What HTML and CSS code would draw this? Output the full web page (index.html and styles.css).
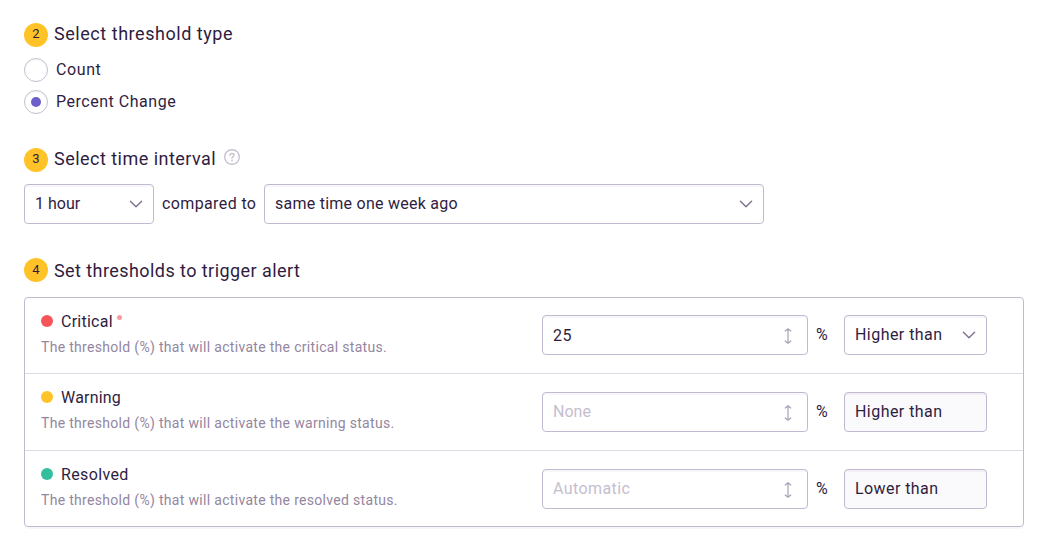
FILE: index.html
```html
<!DOCTYPE html>
<html lang="en">
<head>
<meta charset="utf-8">
<title>Alert thresholds</title>
<link rel="stylesheet" href="styles.css">
</head>
<body>
<svg class="sprite" aria-hidden="true">
  <symbol id="chevron" viewBox="0 0 14 8"><path d="M1.4 1.2 7 6.7 12.6 1.2"/></symbol>
  <symbol id="updown" viewBox="0 0 8 16"><path d="M4 .8v14.4M1.2 3 4 .8 6.8 3M1.2 13 4 15.2 6.8 13"/></symbol>
</svg>
<main class="form">
  <section class="step">
    <h2 class="title"><span class="badge">2</span><span class="title-text t-type">Select threshold type</span></h2>
    <div class="radios">
      <label class="radio"><span class="dial"></span><span class="t-count">Count</span></label>
      <label class="radio"><span class="dial checked"></span><span class="t-percent">Percent Change</span></label>
    </div>
  </section>

  <section class="step step-interval">
    <h2 class="title"><span class="badge">3</span><span class="title-text t-interval">Select time interval</span>
      <svg class="help" viewBox="0 0 16 16"><circle cx="8" cy="8" r="7.3"/><path d="M6 6.4C6 5.2 6.8 4.5 8 4.5s2 .7 2 1.7C10 7.6 8 7.6 8 9.2"/><circle class="point" cx="8" cy="11.4" r=".9"/></svg>
    </h2>
    <div class="interval">
      <div class="field duration"><span class="t-hour">1 hour</span><svg class="chevron"><use href="#chevron"/></svg></div>
      <span class="t-compared">compared to</span>
      <div class="field comparison"><span class="t-same">same time one week ago</span><svg class="chevron"><use href="#chevron"/></svg></div>
    </div>
  </section>

  <section class="step step-thresholds">
    <h2 class="title"><span class="badge">4</span><span class="title-text t-set">Set thresholds to trigger alert</span></h2>
    <div class="panel">
      <div class="row">
        <div class="info">
          <div class="name"><i class="dot critical"></i><span class="t-critical">Critical</span><i class="required"></i></div>
          <div class="desc">The threshold (%) that will activate the critical status.</div>
        </div>
        <div class="field number"><span class="t-number">25</span><svg class="updown"><use href="#updown"/></svg></div>
        <span class="unit">%</span>
        <div class="field direction"><span class="t-higher">Higher than</span><svg class="chevron"><use href="#chevron"/></svg></div>
      </div>
      <div class="row">
        <div class="info">
          <div class="name"><i class="dot warning"></i><span class="t-warning">Warning</span></div>
          <div class="desc">The threshold (%) that will activate the warning status.</div>
        </div>
        <div class="field number empty"><span class="t-none">None</span><svg class="updown"><use href="#updown"/></svg></div>
        <span class="unit">%</span>
        <div class="field direction disabled"><span class="t-higher">Higher than</span></div>
      </div>
      <div class="row">
        <div class="info">
          <div class="name"><i class="dot resolved"></i><span class="t-resolved">Resolved</span></div>
          <div class="desc">The threshold (%) that will activate the resolved status.</div>
        </div>
        <div class="field number empty"><span class="t-auto">Automatic</span><svg class="updown"><use href="#updown"/></svg></div>
        <span class="unit">%</span>
        <div class="field direction disabled"><span class="t-lower">Lower than</span></div>
      </div>
    </div>
  </section>
</main>
</body>
</html>
```

FILE: styles.css
```css
* { box-sizing: border-box; }
body {
  margin: 0;
  background: #fff;
  color: #2f1d3f;
  font: 16px/24px Roboto, "Liberation Sans", sans-serif;
}
.sprite { display: none; }
.form { width: 1050px; height: 554px; padding: 23px 26px 0 24px; }
.title { display: flex; align-items: center; height: 24px; margin: 0; font-size: 18px; font-weight: 400; }
.title-text { margin: -2px 0 0 6px; white-space: nowrap; }
.badge {
  width: 24px; height: 24px; border-radius: 50%;
  background: #ffc227; font-size: 13px; line-height: 22px; text-align: center;
}
.radios { display: flex; flex-direction: column; gap: 8px; margin-top: 11px; }
.radio { display: flex; gap: 8px; height: 24px; line-height: 23px; }
.dial { display: grid; place-items: center; width: 24px; height: 24px; border: 1px solid #c6becf; border-radius: 50%; box-shadow: inset 0 2px 0 rgba(45, 25, 70, .03); }
.dial.checked::after { content: ""; width: 10px; height: 10px; border-radius: 50%; background: #6c5fc7; }
.t-type { letter-spacing: .54px; }
.t-count { letter-spacing: .6px; }
.t-percent { letter-spacing: .52px; }
.t-interval { letter-spacing: .47px; }
.t-set { letter-spacing: .43px; }
.t-same { letter-spacing: .25px; }
.t-higher { letter-spacing: .45px; }
.t-lower { letter-spacing: .42px; }
.t-critical { letter-spacing: .25px; }
.t-warning { letter-spacing: .2px; }
.t-resolved { letter-spacing: .37px; }
.t-auto { letter-spacing: .4px; }
.t-number { padding-top: 2px; letter-spacing: .5px; }
.step-interval { margin-top: 34px; }
.step-interval .title-text { margin-top: -3px; }
.help { width: 16px; height: 16px; margin: -6px 0 0 8px; fill: none; stroke: #c9c2d4; stroke-width: 1.4; stroke-linecap: round; }
.help .point { fill: #c9c2d4; stroke: none; }
.interval { display: flex; gap: 8px; margin-top: 12px; line-height: 40px; }
.field {
  display: flex; align-items: center; justify-content: space-between;
  height: 40px; padding: 0 10px; border: 1px solid #c2b9d0; border-radius: 4px;
  background: #fff; box-shadow: inset 0 2px 0 rgba(45, 25, 70, .04); line-height: 38px; white-space: nowrap;
}
.chevron { width: 14px; height: 8px; fill: none; stroke: #80708f; stroke-width: 1.4; stroke-linecap: round; stroke-linejoin: round; }
.updown { width: 8px; height: 16px; margin: 2px 5px 0 0; fill: none; stroke: #aaa0b8; stroke-width: 1.2; stroke-linecap: round; stroke-linejoin: round; }
.duration { width: 130px; }
.t-compared { width: 94px; white-space: nowrap; letter-spacing: .38px; }
.comparison { width: 500px; }
.step-thresholds { margin-top: 34px; }
.step-thresholds .title-text { margin-top: 2px; }
.step-thresholds .badge { line-height: 24px; }
.panel { margin-top: 15px; border: 1px solid #c2b9d0; border-radius: 4px; box-shadow: 0 2px 0 rgba(45, 25, 70, .04); }
.row { display: flex; height: 77px; padding: 18px 36px 0 16px; border-bottom: 1px solid #e0dce5; }
.row:first-child { height: 76px; padding-top: 17px; }
.row:last-child { height: 75px; border-bottom: 0; }
.info { width: 501px; margin-top: -7px; }
.row:first-child .info { margin-top: -6px; }
.name { display: flex; align-items: center; height: 24px; line-height: 24px; }
.name span { padding-top: 2px; }
.dot { width: 12px; height: 12px; margin-right: 8px; border-radius: 50%; }
.critical { background: #f55459; }
.warning { background: #ffc227; }
.resolved { background: #33bf9e; }
.required { width: 5px; height: 5px; margin: -7px 0 0 4px; border-radius: 50%; background: #fa9a9d; }
.desc { margin-top: 4px; color: #9386a0; font-size: 14px; line-height: 20px; letter-spacing: .31px; white-space: nowrap; }
.number { width: 266px; }
.empty { color: #c6becf; }
.unit { width: 36px; padding-left: 8px; line-height: 39px; }
.direction { width: 143px; }
.disabled { background: #faf9fb; }
```
